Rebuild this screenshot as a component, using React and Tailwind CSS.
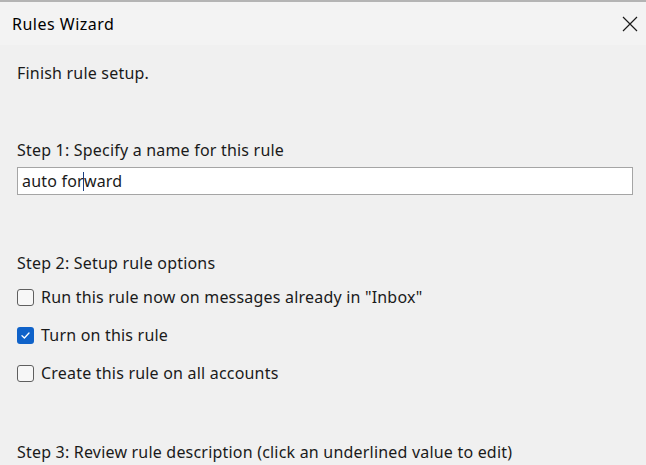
import React from "react";

function Box({ checked }) {
  if (checked) {
    return (
      <div className="w-[17px] h-[17px] rounded-[3px] bg-[#0f62c9] flex items-center justify-center shrink-0">
        <svg width="11" height="11" viewBox="0 0 11 11">
          <path d="M2 5.8 L4.4 8 L9 3" fill="none" stroke="#ffffff" strokeWidth="1.3" strokeLinecap="round" strokeLinejoin="round" />
        </svg>
      </div>
    );
  }
  return <div className="w-[17px] h-[17px] rounded-[3px] border border-[#5f5f5f] bg-[#f7f7f7] shrink-0" />;
}

function Row({ checked, children }) {
  return (
    <div className="flex items-center gap-[7px] h-[20px]">
      <Box checked={checked} />
      <span>{children}</span>
    </div>
  );
}

export default function App() {
  return (
    <div
      className="w-[646px] h-[465px] overflow-hidden bg-[#f0f0f0] text-[#1a1a1a] text-[16px] tracking-[0.2px]"
      style={{ fontFamily: '"Noto Sans", "Open Sans", sans-serif' }}
    >
      <div className="h-[45px] bg-[#f3f3f3] border-t-2 border-[#b4b4b4] flex items-center justify-between pl-[12px] pr-[8px]">
        <span className="text-[16px] text-black tracking-[0.5px]">Rules Wizard</span>
        <svg width="16" height="16" viewBox="0 0 16 16">
          <path d="M1 1 L15 15 M15 1 L1 15" stroke="#1a1a1a" strokeWidth="1.2" />
        </svg>
      </div>
      <div className="pl-[17px] pr-[13px]">
        <div className="mt-[18px] leading-[20px]">Finish rule setup.</div>
        <div className="mt-[57px] leading-[20px]">Step 1: Specify a name for this rule</div>
        <div className="mt-[7px] h-[28px] border border-[#a5a5a5] bg-white flex items-center pl-[4px] leading-[20px]">
          <span>auto for</span>
          <span className="inline-block w-[1px] h-[19px] bg-[#1a3f80] -mx-[0.5px]" />
          <span>ward</span>
        </div>
        <div className="mt-[58px] leading-[20px]">Step 2: Setup rule options</div>
        <div className="mt-[14px] flex flex-col gap-[18px]">
          <Row>Run this rule now on messages already in "Inbox"</Row>
          <Row checked>Turn on this rule</Row>
          <Row>Create this rule on all accounts</Row>
        </div>
        <div className="mt-[59px] leading-[20px]">Step 3: Review rule description (click an underlined value to edit)</div>
      </div>
    </div>
  );
}
